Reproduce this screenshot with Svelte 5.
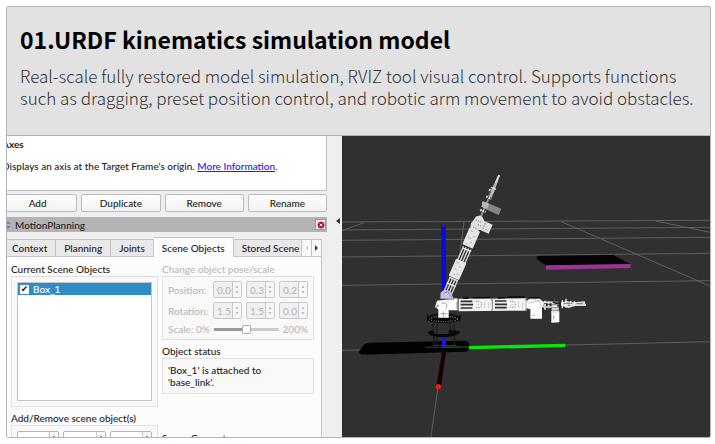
<script>
    let tabs = ["Context", "Planning", "Joints", "Scene Objects", "Stored Scene"];
    let activeTab = "Scene Objects";
    let objects = [{ name: "Box_1", checked: true }];

    let pose = [
        { label: "Position:", values: ["0.0", "0.3", "0.2"] },
        { label: "Rotation:", values: ["1.5", "1.5", "0.0"] }
    ];
    let size = ["0.20", "0.01", "0.20"];
    let scale = 100;
</script>

<article class="card">
    <header>
        <h1>01.URDF kinematics simulation model</h1>
        <p>Real-scale fully restored model simulation, RVIZ tool visual control. Supports functions such as dragging, preset position control, and robotic arm movement to avoid obstacles.</p>
    </header>

    <div class="window">
        <div class="panel">
            <div class="dock">
                <div class="description">
                    <strong>Axes</strong>
                    <p>Displays an axis at the Target Frame's origin. <a href="#more">More Information</a>.</p>
                </div>

                <div class="actions">
                    <button type="button">Add</button>
                    <button type="button">Duplicate</button>
                    <button type="button">Remove</button>
                    <button type="button">Rename</button>
                </div>

                <div class="titlebar">
                    <svg class="grip" viewBox="0 0 6 8" aria-hidden="true">
                        <path d="M3 0l3 3H0zM3 8L0 5h6z" fill="#4d8fc4" />
                    </svg>
                    <span>MotionPlanning</span>
                    <button type="button" class="close" aria-label="Close">
                        <svg viewBox="0 0 8 8" aria-hidden="true">
                            <circle cx="4" cy="4" r="3.5" fill="#c0142d" />
                            <path d="M2.7 2.7l2.6 2.6M5.3 2.7L2.7 5.3" stroke="#fff" stroke-width="1" />
                        </svg>
                    </button>
                </div>

                <div class="tabs">
                    {#each tabs as tab}
                        <button type="button" class="tab" class:active={tab === activeTab} on:click={() => (activeTab = tab)}>{tab}</button>
                    {/each}
                    <button type="button" class="scroll" aria-label="Scroll left" disabled>
                        <svg viewBox="0 0 4 6"><path d="M3 1v4L1 3z" fill="#c4c4c4" /></svg>
                    </button>
                    <button type="button" class="scroll" aria-label="Scroll right">
                        <svg viewBox="0 0 4 6"><path d="M0 0v6l3-3z" fill="#333" /></svg>
                    </button>
                </div>

                <div class="page">
                    <div class="column">
                        <section>
                            <h2>Current Scene Objects</h2>
                            <div class="group">
                                <ul>
                                    {#each objects as object}
                                        <li>
                                            <label><input type="checkbox" bind:checked={object.checked} />{object.name}</label>
                                        </li>
                                    {/each}
                                </ul>
                            </div>
                        </section>
                        <section>
                            <h2>Add/Remove scene object(s)</h2>
                            <div class="group sizes">
                                {#each size as value, i}
                                    <span class="spin">
                                        <input type="text" aria-label={"Size " + (i + 1)} {value} />
                                        <svg viewBox="0 0 10 16"><path d="M5 3l2 3H3zM5 13l-2-3h4z" fill="#555" /></svg>
                                    </span>
                                {/each}
                            </div>
                        </section>
                    </div>

                    <div class="column">
                        <section class="disabled">
                            <h2>Change object pose/scale</h2>
                            <div class="group pose">
                                {#each pose as row}
                                    <div class="row">
                                        <span class="name">{row.label}</span>
                                        {#each row.values as value, i}
                                            <span class="spin">
                                                <input type="text" aria-label={row.label + " " + (i + 1)} {value} disabled />
                                                <svg viewBox="0 0 10 16"><path d="M5 3l2 3H3zM5 13l-2-3h4z" fill="#bbb" /></svg>
                                            </span>
                                        {/each}
                                    </div>
                                {/each}
                                <div class="row">
                                    <label for="scale">Scale: 0%</label>
                                    <input id="scale" type="range" min="0" max="200" bind:value={scale} disabled />
                                    <span>200%</span>
                                </div>
                            </div>
                        </section>
                        <section>
                            <h2>Object status</h2>
                            <div class="group status">'Box_1' is attached to<br />'base_link'.</div>
                        </section>
                        <section class="geometry">
                            <h2>Scene Geometry</h2>
                        </section>
                    </div>
                </div>
            </div>

            <button type="button" class="splitter" aria-label="Collapse panel">
                <svg viewBox="0 0 4 6"><path d="M4 0v6L0 3z" fill="#333" /></svg>
            </button>
        </div>

        <svg class="scene" viewBox="6 18 1104 903" preserveAspectRatio="xMidYMid slice" role="img" aria-label="Robot arm in the 3D view">
            <rect x="-500" y="-500" width="2500" height="2500" fill="#303030" />

            <!-- ground grid -->
            <g fill="none" stroke="#686868" stroke-width="2.5">
                <path d="M6 276L1110 271M6 300L1110 292M6 331L1110 322M6 381L1110 370M6 466L1110 452M6 661L1110 635" />
                <path d="M6 302L72 278M372 276L358 380L345 470M664 275L1110 468M948 273L1110 307M294 770L273 921" />
            </g>

            <!-- box obstacle -->
            <path d="M591 378L820 375L872 403L619 407L590 387z" fill="#050205" />
            <path d="M618 406L872 402V414L618 419z" fill="#9c3498" />

            <!-- base plate and axes -->
            <path d="M90 638L375 632Q387 634 387 642V656Q386 664 376 665L66 674Q55 672 58 664L68 648Q74 639 90 638z" fill="#020202" />
            <path d="M387 653L676 646" stroke="#06e806" stroke-width="10" />
            <path d="M318 651H387" stroke="#087a08" stroke-width="3" />
            <path d="M304 289H317L319 500H305z" fill="#0909d9" />
            <path d="M306 664L318 665L303 768L289 766z" fill="#100002" />
            <path d="M307 664L291 765" stroke="#500a0a" stroke-width="2" />
            <circle cx="295" cy="770" r="8" fill="#f81717" />

            <!-- turntable -->
            <g fill="none" stroke="#1b1b1b" stroke-width="4">
                <path d="M279 580L284 655M342 580L345 655M291 580V650M330 580V602" />
            </g>
            <path d="M306 624H318V652H306z" fill="#1717e8" />
            <path d="M257 652H358M278 646H348" stroke="#383838" stroke-width="3" />
            <path d="M263 607L278 600L284 612H326V600L355 602L361 609L340 618Q306 626 270 616z" fill="#080808" />
            <ellipse cx="311" cy="566" rx="49" ry="14" fill="#070707" />
            <ellipse cx="311" cy="559" rx="44" ry="9" fill="#111" />
            <ellipse cx="311" cy="567" rx="41" ry="8" fill="none" stroke="#777" stroke-width="4" stroke-dasharray="3 4" />
            <path d="M263 555V572M359 555V573" stroke="#050505" stroke-width="4" />

            <!-- raised arm -->
            <g transform="translate(318 498) rotate(23.5)">
                <path d="M-12 -50V0H14V-50zM-12 -154V-112H14V-154z" fill="#343434" />
                <path d="M-11 -55V0M-3 -55V0M5 -55V0M13 -55V0M-11 -158V-104M-3 -158V-104M5 -158V-104M13 -158V-104" stroke="#dcdcdc" stroke-width="4" />
                <path d="M-14 -56H15M-14 -37H15M-13 -152H16M-12 -112H14" stroke="#e5e5e5" stroke-width="4" />
                <rect x="-17" y="-115" width="34" height="56" rx="3" fill="#e6e6e6" />
                <rect x="-17" y="-218" width="34" height="56" rx="3" fill="#e6e6e6" />
                <path d="M-12 -106H-4M0 -96H8M-9 -86H-3M3 -74H10M-7 -69H0M-10 -209H-3M3 -197H10M-9 -188H0M2 -177H8M-8 -169H-4" stroke="#999" stroke-width="2" />
                <path d="M-18 -229L-12 -256L1 -265L16 -252H43V-222H13L7 -214H-14z" fill="#e0e0e0" />
                <path d="M-9 -245H8M2 -234H16M21 -247V-228M28 -230H36M-8 -222H3" stroke="#888" stroke-width="3" stroke-dasharray="4 3" />
                <path d="M-2 -263V-350L4 -358V-260z" fill="#8e8e8e" />
                <path d="M-9 -278H8M-12 -301H14M-8 -322H8M-9 -344H8" stroke="#ddd" stroke-width="7" stroke-dasharray="5 2" />
                <path d="M7 -306H48V-286H7z" fill="#858585" />
                <path d="M-10 -305H9V-288H-10z" fill="#b7b7b7" />
                <path d="M-4 -326L-2 -356L-1 -396L5 -397L7 -356L8 -325z" fill="#b8b8b8" />
                <path d="M-6 -353H10M1 -372V-395" stroke="#ddd" stroke-width="4" />
                <path d="M-2 -315V-342M5 -272V-285" stroke="#333" stroke-width="2" />
            </g>

            <!-- base joint -->
            <path d="M301 506L302 488L312 479L331 484L341 506z" fill="#c8c4e8" />
            <path d="M311 490L324 485L334 502" fill="none" stroke="#8e8ba8" stroke-width="3" />
            <path d="M291 512L350 505L356 509V541H326V563H295V538L285 532z" fill="#fff" />
            <path d="M304 519H315Q323 524 320 532L315 538M322 510L343 508M351 514V537M310 545V561M301 551H322" fill="none" stroke="#777" stroke-width="2" />
            <path d="M296 524L289 533" stroke="#888" stroke-width="4" />

            <!-- horizontal arm -->
            <path d="M356 506L560 505V542L356 544z" fill="#eee" />
            <path d="M362 514H397M362 524H399M362 534H397M465 513H499M465 523H501M465 533H500" stroke="#303030" stroke-width="5" />
            <path d="M369 504H386M399 503L451 502M474 504L497 503M502 501H554M567 503H601" stroke="#080808" stroke-width="4" />
            <path d="M354 508V543M456 506V542M558 506V541" stroke="#494949" stroke-width="3" />
            <path d="M402 509H450L455 513V537L449 541H401z M503 508H552L557 512V536L551 540H503z" fill="#f6f6f6" />
            <path d="M407 514H420Q430 523 420 533H407M510 514H522Q531 522 522 532H510" fill="none" stroke="#888" stroke-width="3" stroke-dasharray="4 3" />
            <path d="M434 514V535M446 516V536M536 514V535M548 516V536M411 523H418M514 523H521" stroke="#bbb" stroke-width="2" />
            <path d="M559 514L569 506H599L612 518L610 531H606V566H571V538L559 535z" fill="#fff" />
            <path d="M566 519L596 513L603 525V532M579 508L601 513M575 556H585" fill="none" stroke="#888" stroke-width="2" stroke-dasharray="4 2" />
            <path d="M606 517L638 517M608 531H636" stroke="#ddd" stroke-width="5" />
            <path d="M615 512V540M626 514V535" stroke="#eee" stroke-width="5" stroke-dasharray="7 3" />
            <path d="M634 544H658V577L634 578z" fill="#fff" />
            <path d="M635 515H656V550H635z" fill="#e7e7e7" />
            <path d="M634 524H658M635 533H656M637 541H655M643 504V514M641 557V568" stroke="#555" stroke-width="2" />
            <path d="M638 517L676 525L652 528M644 521L690 511" fill="none" stroke="#222" stroke-width="4" />
            <path d="M663 517L681 513L699 517L735 514V521H738V528H704L686 534L663 527z" fill="#ddd" />
            <path d="M667 511V535M678 506V533M692 512V531M703 514V529" stroke="#f7f7f7" stroke-width="4" />
            <path d="M671 520H697M709 521H729M684 526H692" stroke="#444" stroke-width="2" />
        </svg>
    </div>
</article>

<style>
:global(body){
    background: #fff;
}

*{
    box-sizing: border-box;
    margin: 0;
    padding: 0;
}

/* Card */
.card{
    display: flex;
    flex-direction: column;
    height: calc(100vh - 12px);
    margin: 6px 4px 6px 6px;
    border: 1px solid #b4b4b4;
    border-radius: 2px;
    overflow: hidden;
}

header{
    padding: 14px 8px 26px 13px;
    background: #e2e2e2;
    border-bottom: 1px solid #b4b4b4;
    font-family: "Noto Sans CJK SC", "Noto Sans", sans-serif;
}

h1{
    font-size: 23px;
    font-weight: 700;
    line-height: 36px;
    color: #000;
}

header p{
    margin-top: 8px;
    font-size: 17px;
    font-weight: 300;
    line-height: 22px;
    color: #333;
}

.window{
    display: flex;
    flex: 1;
    min-height: 0;
    font-family: Lato, "Noto Sans", sans-serif;
    font-size: 10px;
    font-weight: 500;
    line-height: 12px;
    color: #222;
}

button, input{
    font: inherit;
    color: inherit;
}

svg{
    display: block;
}

/* Left panel, its left edge runs out of view */
.panel{
    display: flex;
    flex: 0 0 335px;
    overflow: hidden;
    background: #efefef;
}

.dock{
    flex: 1;
    min-width: 0;
    margin-left: -9px;
}

.description{
    height: 55px;
    padding: 2px 0 0 3px;
    background: #fff;
    border: 1px solid #c0c0c0;
    border-top: 0;
}

.description p{
    margin-top: 10px;
}

.description a{
    color: #2222dd;
}

.actions{
    display: grid;
    grid-template-columns: repeat(4, 1fr);
    gap: 4px;
    margin-top: 3px;
}

.actions button{
    height: 18px;
    background: linear-gradient(#fefefe, #f2f2f2);
    border: 1px solid #bcbcbc;
    border-radius: 2px;
}

.titlebar{
    display: flex;
    align-items: center;
    gap: 4px;
    height: 15px;
    margin-top: 5px;
    padding: 0 1px 0 7px;
    background: #b3b3b3;
}

.grip{
    width: 6px;
    height: 8px;
}

.close{
    display: grid;
    place-items: center;
    width: 11px;
    height: 11px;
    margin-left: auto;
    background: #f4f4f4;
    border: 1px solid #999;
}

.close svg{
    width: 8px;
    height: 8px;
}

/* Tabs */
.tabs{
    display: flex;
    align-items: flex-end;
    height: 20px;
    margin: 5px 5px 0 6px;
}

.tab{
    flex: none;
    height: 18px;
    padding: 0 8px;
    background: #e9e9e9;
    border: 1px solid #c4c4c4;
    border-left: 0;
    white-space: nowrap;
}

.tab.active{
    height: 20px;
    background: #fcfcfc;
    border-bottom: 0;
}

.tab:nth-of-type(5){
    flex: 1 1 0;
    min-width: 0;
    padding-right: 0;
    overflow: hidden;
    text-align: left;
}

.scroll{
    display: grid;
    place-items: center;
    flex: none;
    width: 10px;
    height: 18px;
    background: #f8f8f8;
    border: 1px solid #c4c4c4;
    border-left: 0;
}

.scroll svg, .splitter svg{
    width: 4px;
    height: 6px;
}

.page{
    display: flex;
    gap: 4px;
    height: 240px;
    margin-right: 5px;
    padding: 6px 7px 0 13px;
    background: #fcfcfc;
    border-right: 1px solid #c4c4c4;
}

.column{
    flex: 1;
    min-width: 0;
}

.column:first-child{
    flex: 0 0 147px;
}

h2{
    font-size: 10px;
    font-weight: 500;
    line-height: 12px;
    white-space: nowrap;
}

.group{
    margin-top: 1px;
    padding: 5px;
    background: #f9f9f9;
    border: 1px solid #e0e0e0;
}

ul{
    height: 119px;
    background: #fff;
    border: 1px solid #c4c4c4;
    list-style: none;
}

li{
    background: #308cc6;
    color: #fff;
}

li label{
    display: flex;
    align-items: center;
    gap: 4px;
    padding-left: 2px;
}

li input{
    appearance: none;
    width: 9px;
    height: 9px;
    background: #fff;
}

li input:checked::before{
    content: "✔";
    display: block;
    font: 9px/9px "DejaVu Sans", sans-serif;
    color: #111;
    text-align: center;
}

.column section + section{
    margin-top: 5px;
}

.pose{
    padding: 4px 5px;
}

.row, .sizes{
    display: flex;
    align-items: center;
    gap: 4px;
}

.row + .row{
    margin-top: 4px;
}

.name{
    flex: 1;
}

.spin{
    display: flex;
    flex: 0 0 29px;
    height: 17px;
    background: #fff;
    border: 1px solid #b5b5b5;
    border-radius: 2px;
    overflow: hidden;
}

.sizes .spin{
    flex: 1;
}

.spin input{
    flex: 1;
    min-width: 0;
    padding-left: 3px;
    background: transparent;
    border: 0;
}

.spin svg{
    flex: 0 0 9px;
    height: 15px;
    background: #f7f7f7;
    border-left: 1px solid #c8c8c8;
}

.disabled{
    color: #b8b8b8;
}

.disabled .spin{
    background: #f0f0f0;
    border-color: #c8c8c8;
}

#scale{
    appearance: none;
    flex: 1;
    min-width: 0;
    height: 10px;
    background: linear-gradient(90deg, #999 50%, #ccc 50%) center / 100% 3px no-repeat;
}

#scale::-webkit-slider-thumb{
    appearance: none;
    width: 9px;
    height: 9px;
    background: #fff;
    border: 1px solid #aaa;
    border-radius: 2px;
}

.status{
    min-height: 34px;
}

.column .geometry{
    margin-top: 38px;
}

.splitter{
    display: grid;
    place-items: center;
    flex: 0 0 15px;
    height: 170px;
    padding-left: 6px;
    background: none;
    border: 0;
}

.scene{
    flex: 1;
    min-width: 0;
    height: 100%;
}
</style>
